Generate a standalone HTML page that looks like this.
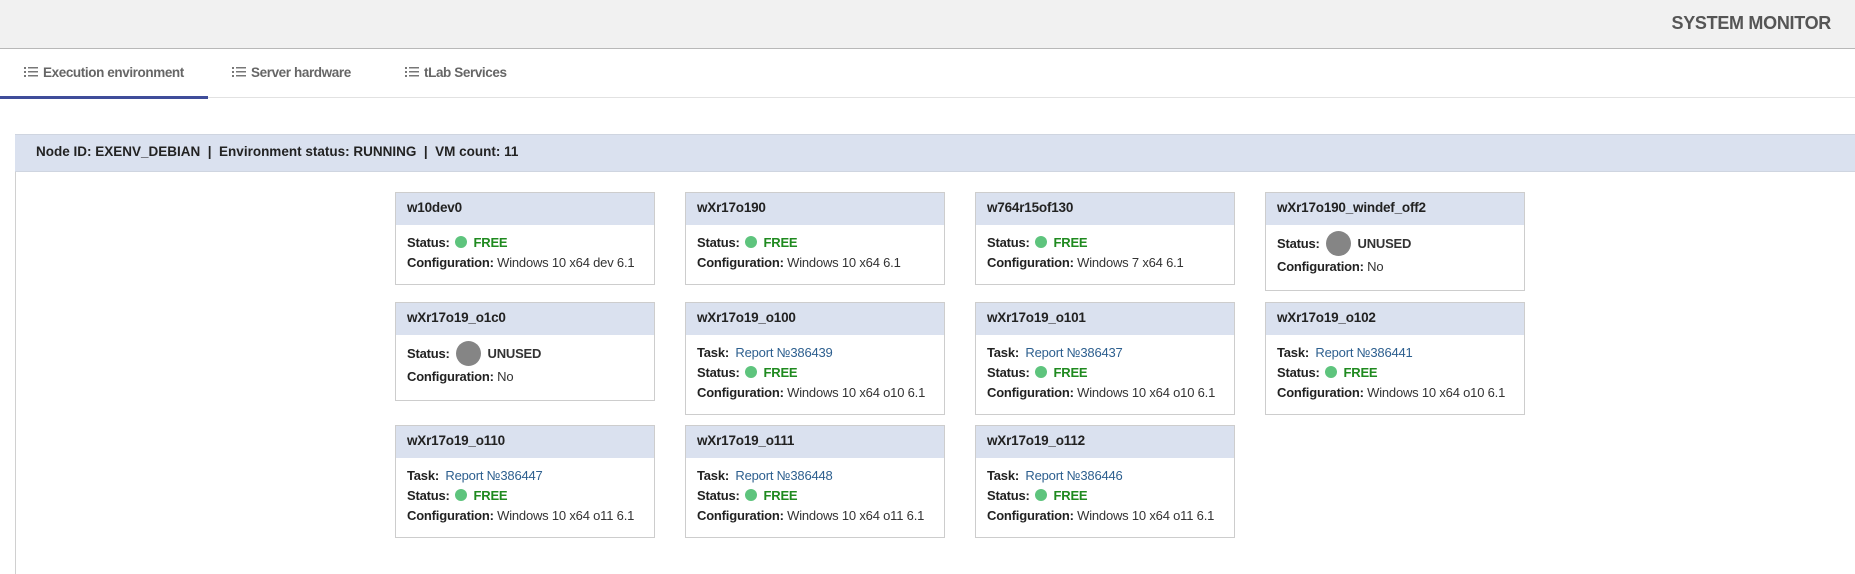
<!DOCTYPE html>
<html><head><meta charset="utf-8">
<style>
*{margin:0;padding:0;box-sizing:border-box}
body{width:1855px;height:569px;overflow:hidden;background:#fff;font-family:"Liberation Sans",Arial,sans-serif;color:#333;position:relative}
.top{position:absolute;left:0;top:0;width:1855px;height:49px;background:#f1f1f1;border-bottom:1px solid #b8b8b8}
.title{position:absolute;right:24px;top:13px;font-size:18px;font-weight:bold;color:#555;letter-spacing:-0.3px}
.tabline{position:absolute;left:0;top:97px;width:1855px;height:1px;background:#e2e2e2}
.active{position:absolute;left:0;top:96px;width:208px;height:3px;background:#3f4d9a}
.tab{position:absolute;top:65px;font-size:13.5px;font-weight:bold;color:#666;letter-spacing:-0.4px;white-space:nowrap}
.ic{display:inline-block;vertical-align:-1px;margin-right:5px}
.panel{position:absolute;left:15px;top:134px;width:1840px;height:440px;border-left:1.5px solid #d0d0d0}
.node{position:absolute;left:15px;top:134px;width:1840px;height:38px;background:#dae1ef;border-top:1px solid #cfd5e0;border-bottom:1px solid #cfd5e0;font-size:13.5px;font-weight:bold;color:#222;padding:9px 0 0 21px;letter-spacing:0px;white-space:pre}
.card{position:absolute;width:260px;border:1px solid #cdcdcd;background:#fff}
.card .h{height:32px;background:#dae1ef;font-weight:bold;font-size:13.5px;padding:7px 0 0 11px;color:#222;letter-spacing:-0.2px}
.card .b{padding:8px 0 11px 11px;font-size:13px;line-height:20px;letter-spacing:-0.2px;white-space:nowrap;color:#333}
.b b{color:#222}
.dot{display:inline-block;width:12px;height:12px;border-radius:50%;background:#5ec47d;vertical-align:-1px;margin:0 3px 0 2px}
.free{color:#1f8a1f;font-weight:bold}
.gray{display:inline-block;width:25px;height:25px;border-radius:50%;background:#858585;vertical-align:-8px;margin:0 3px 0 3px}
.un{font-weight:bold;color:#333}
.b.u{padding-top:6px;padding-bottom:12px;line-height:22px}
a{color:#2d5f8f;text-decoration:none;margin-left:3px}
</style></head><body>
<div class="top"><div class="title">SYSTEM MONITOR</div></div>
<div class="tabline"></div><div class="active"></div>
<div class="tab" style="left:24px"><svg class="ic" width="14" height="12" viewBox="0 0 14 12"><g fill="#777"><rect x="0" y="1" width="2" height="2"/><rect x="0" y="5" width="2" height="2"/><rect x="0" y="9" width="2" height="2"/><rect x="4" y="1" width="10" height="1.5"/><rect x="4" y="5" width="10" height="1.5"/><rect x="4" y="9" width="10" height="1.5"/></g></svg>Execution environment</div>
<div class="tab" style="left:232px"><svg class="ic" width="14" height="12" viewBox="0 0 14 12"><g fill="#777"><rect x="0" y="1" width="2" height="2"/><rect x="0" y="5" width="2" height="2"/><rect x="0" y="9" width="2" height="2"/><rect x="4" y="1" width="10" height="1.5"/><rect x="4" y="5" width="10" height="1.5"/><rect x="4" y="9" width="10" height="1.5"/></g></svg>Server hardware</div>
<div class="tab" style="left:405px"><svg class="ic" width="14" height="12" viewBox="0 0 14 12"><g fill="#777"><rect x="0" y="1" width="2" height="2"/><rect x="0" y="5" width="2" height="2"/><rect x="0" y="9" width="2" height="2"/><rect x="4" y="1" width="10" height="1.5"/><rect x="4" y="5" width="10" height="1.5"/><rect x="4" y="9" width="10" height="1.5"/></g></svg>tLab Services</div>
<div class="panel"></div>
<div class="node">Node ID: EXENV_DEBIAN  |  Environment status: RUNNING  |  VM count: 11</div>

<div class="card" style="left:395px;top:192px"><div class="h">w10dev0</div><div class="b"><b>Status:</b> <span class="dot"></span> <span class="free">FREE</span><br><b>Configuration:</b> Windows 10 x64 dev 6.1</div></div>
<div class="card" style="left:685px;top:192px"><div class="h">wXr17o190</div><div class="b"><b>Status:</b> <span class="dot"></span> <span class="free">FREE</span><br><b>Configuration:</b> Windows 10 x64 6.1</div></div>
<div class="card" style="left:975px;top:192px"><div class="h">w764r15of130</div><div class="b"><b>Status:</b> <span class="dot"></span> <span class="free">FREE</span><br><b>Configuration:</b> Windows 7 x64 6.1</div></div>
<div class="card" style="left:1265px;top:192px"><div class="h">wXr17o190_windef_off2</div><div class="b u"><b>Status:</b> <span class="gray"></span> <span class="un">UNUSED</span><br><b>Configuration:</b> No</div></div>

<div class="card" style="left:395px;top:302px"><div class="h">wXr17o19_o1c0</div><div class="b u"><b>Status:</b> <span class="gray"></span> <span class="un">UNUSED</span><br><b>Configuration:</b> No</div></div>
<div class="card" style="left:685px;top:302px"><div class="h">wXr17o19_o100</div><div class="b"><b>Task:</b> <a>Report №386439</a><br><b>Status:</b> <span class="dot"></span> <span class="free">FREE</span><br><b>Configuration:</b> Windows 10 x64 o10 6.1</div></div>
<div class="card" style="left:975px;top:302px"><div class="h">wXr17o19_o101</div><div class="b"><b>Task:</b> <a>Report №386437</a><br><b>Status:</b> <span class="dot"></span> <span class="free">FREE</span><br><b>Configuration:</b> Windows 10 x64 o10 6.1</div></div>
<div class="card" style="left:1265px;top:302px"><div class="h">wXr17o19_o102</div><div class="b"><b>Task:</b> <a>Report №386441</a><br><b>Status:</b> <span class="dot"></span> <span class="free">FREE</span><br><b>Configuration:</b> Windows 10 x64 o10 6.1</div></div>

<div class="card" style="left:395px;top:425px"><div class="h">wXr17o19_o110</div><div class="b"><b>Task:</b> <a>Report №386447</a><br><b>Status:</b> <span class="dot"></span> <span class="free">FREE</span><br><b>Configuration:</b> Windows 10 x64 o11 6.1</div></div>
<div class="card" style="left:685px;top:425px"><div class="h">wXr17o19_o111</div><div class="b"><b>Task:</b> <a>Report №386448</a><br><b>Status:</b> <span class="dot"></span> <span class="free">FREE</span><br><b>Configuration:</b> Windows 10 x64 o11 6.1</div></div>
<div class="card" style="left:975px;top:425px"><div class="h">wXr17o19_o112</div><div class="b"><b>Task:</b> <a>Report №386446</a><br><b>Status:</b> <span class="dot"></span> <span class="free">FREE</span><br><b>Configuration:</b> Windows 10 x64 o11 6.1</div></div>
</body></html>
